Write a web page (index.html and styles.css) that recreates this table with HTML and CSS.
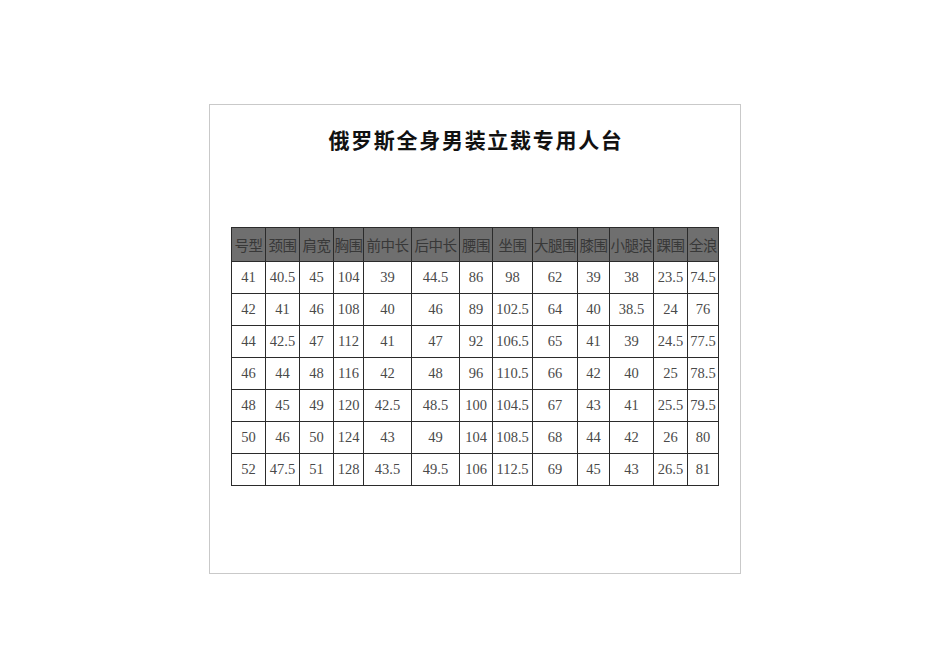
FILE: index.html
```html
<!DOCTYPE html>
<html lang="zh-CN">
<head>
<meta charset="utf-8">
<title>俄罗斯全身男装立裁专用人台</title>
<link rel="stylesheet" href="styles.css">
</head>
<body>
<div class="page">
  <h1 class="title">俄罗斯全身男装立裁专用人台</h1>
  <table class="sizes">
    <colgroup>
      <col class="w34"><col class="w34"><col class="w34"><col class="w30"><col class="w48"><col class="w48"><col class="w33"><col class="w40"><col class="w45"><col class="w32"><col class="w44"><col class="w34"><col class="w31">
    </colgroup>
    <thead>
      <tr><th>号型</th><th>颈围</th><th>肩宽</th><th>胸围</th><th>前中长</th><th>后中长</th><th>腰围</th><th>坐围</th><th>大腿围</th><th>膝围</th><th>小腿浪</th><th>踝围</th><th>全浪</th></tr>
    </thead>
    <tbody>
      <tr><td>41</td><td>40.5</td><td>45</td><td>104</td><td>39</td><td>44.5</td><td>86</td><td>98</td><td>62</td><td>39</td><td>38</td><td>23.5</td><td>74.5</td></tr>
      <tr><td>42</td><td>41</td><td>46</td><td>108</td><td>40</td><td>46</td><td>89</td><td>102.5</td><td>64</td><td>40</td><td>38.5</td><td>24</td><td>76</td></tr>
      <tr><td>44</td><td>42.5</td><td>47</td><td>112</td><td>41</td><td>47</td><td>92</td><td>106.5</td><td>65</td><td>41</td><td>39</td><td>24.5</td><td>77.5</td></tr>
      <tr><td>46</td><td>44</td><td>48</td><td>116</td><td>42</td><td>48</td><td>96</td><td>110.5</td><td>66</td><td>42</td><td>40</td><td>25</td><td>78.5</td></tr>
      <tr><td>48</td><td>45</td><td>49</td><td>120</td><td>42.5</td><td>48.5</td><td>100</td><td>104.5</td><td>67</td><td>43</td><td>41</td><td>25.5</td><td>79.5</td></tr>
      <tr><td>50</td><td>46</td><td>50</td><td>124</td><td>43</td><td>49</td><td>104</td><td>108.5</td><td>68</td><td>44</td><td>42</td><td>26</td><td>80</td></tr>
      <tr><td>52</td><td>47.5</td><td>51</td><td>128</td><td>43.5</td><td>49.5</td><td>106</td><td>112.5</td><td>69</td><td>45</td><td>43</td><td>26.5</td><td>81</td></tr>
    </tbody>
  </table>
</div>
</body>
</html>
```
FILE: styles.css
```css
html, body {
  margin: 0;
  padding: 0;
  background: #ffffff;
}

body {
  font-family: "Liberation Serif", "Noto Sans CJK SC", serif;
}

.page {
  box-sizing: border-box;
  width: 532px;
  height: 470px;
  margin: 104px auto 0;
  border: 1px solid #c9c9c9;
  padding-top: 21px;
  display: flex;
  flex-direction: column;
  align-items: center;
}

.title {
  margin: 0;
  font-family: "Noto Sans CJK SC", sans-serif;
  font-weight: 700;
  font-size: 21px;
  line-height: 26px;
  letter-spacing: 1.7px;
  color: #111111;
  padding-left: 2px;
}

.sizes {
  margin-top: 75px;
  border-collapse: collapse;
  table-layout: fixed;
  width: 487px;
  border: 1px solid #2b2b2b;
}

.w30 { width: 30px; }
.w31 { width: 31px; }
.w32 { width: 32px; }
.w33 { width: 33px; }
.w34 { width: 34px; }
.w40 { width: 40px; }
.w44 { width: 44px; }
.w45 { width: 45px; }
.w48 { width: 48px; }

.sizes th,
.sizes td {
  border: 1px solid #2b2b2b;
  padding: 0;
  text-align: center;
  white-space: nowrap;
  overflow: hidden;
}

.sizes th {
  height: 33px;
  background: #6f6f6f;
  color: #383838;
  font-family: "Noto Sans CJK SC", serif;
  font-weight: 400;
  font-size: 14.5px;
  letter-spacing: -0.5px;
}

.sizes td {
  height: 31px;
  color: #4a4a4a;
  font-size: 14.5px;
}
```
